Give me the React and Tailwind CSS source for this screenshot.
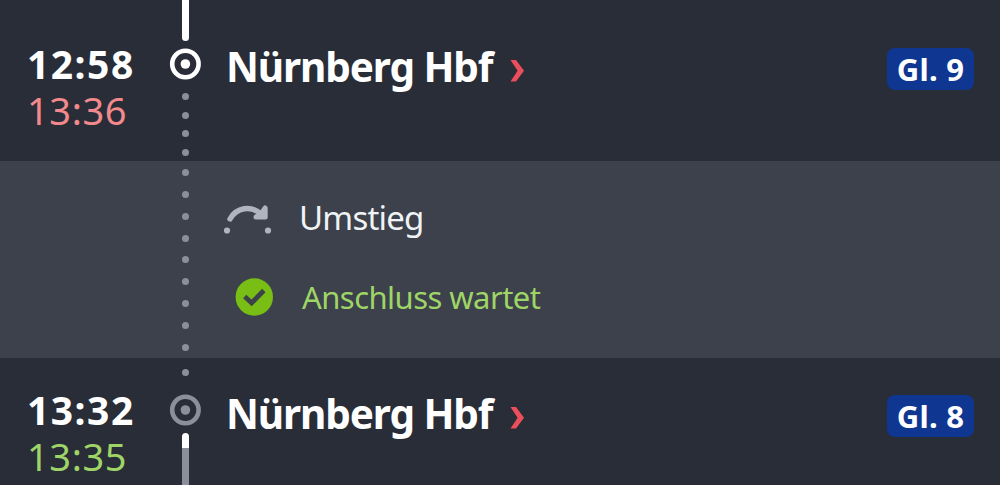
function Dots({ count, className }) {
  return (
    <div className={`flex flex-col items-center ${className}`}>
      {Array.from({ length: count }, (_, i) => (
        <span key={i} className="size-[7px] rounded-full bg-[#8b8f9b]" />
      ))}
    </div>
  );
}

function StopRing({ className }) {
  return (
    <svg viewBox="0 0 32 32" className={`size-8 shrink-0 ${className}`}>
      <circle cx="16.4" cy="16" r="13.2" fill="none" stroke="currentColor" strokeWidth="4.6" />
      <circle cx="16.4" cy="16" r="4.8" fill="currentColor" />
    </svg>
  );
}

function Chevron() {
  return (
    <svg viewBox="0 0 14 22" className="h-[22px] w-[14px] shrink-0">
      <path d="M0.5 0H6L14 10.8L6 21.6H0.5L7.6 10.8Z" fill="#ec4f5b" />
    </svg>
  );
}

function Times({ planned, actual, actualClass, className }) {
  return (
    <div className={`w-[169px] shrink-0 pl-[27px] ${className}`}>
      <div className="text-[39px] leading-[46px] font-bold tracking-[1.5px] text-white">{planned}</div>
      <div className={`text-[38px] leading-[46px] tracking-[0.6px] ${actualClass}`}>{actual}</div>
    </div>
  );
}

function Station({ name, track, className }) {
  return (
    <div className={`flex flex-1 items-start pr-[26px] pl-[25px] ${className}`}>
      <h2 className="w-[284px] text-[40.5px] leading-[56px] font-bold tracking-[-1.1px] whitespace-nowrap text-white">
        {name}
      </h2>
      <div className="pt-[21px]">
        <Chevron />
      </div>
      <div className="mt-[9px] ml-auto flex h-[42px] w-[87px] items-center justify-center rounded-lg bg-[#0f3792] text-[31px] font-bold tracking-[0.3px] whitespace-nowrap text-white">
        {track}
      </div>
    </div>
  );
}

function TransferIcon() {
  return (
    <svg viewBox="0 0 50 32" className="mt-[2px] h-8 w-[50px]" fill="none" stroke="#afb4bf">
      <path d="M7 16C13 5 28 1 39 12" strokeWidth="5.4" strokeLinecap="round" />
      <path
        d="M42.2 5V14H33L38 11Z"
        fill="#afb4bf"
        strokeWidth="5"
        strokeLinecap="round"
        strokeLinejoin="round"
      />
      <circle cx="4" cy="27.5" r="3.1" fill="#afb4bf" stroke="none" />
      <circle cx="45" cy="27.5" r="3.1" fill="#afb4bf" stroke="none" />
    </svg>
  );
}

function CheckIcon() {
  return (
    <svg viewBox="0 0 38 38" className="size-[38px]">
      <circle cx="19.3" cy="19" r="18.7" fill="#78be14" />
      <path d="M9.7 18.6L16.6 25L28.8 12.5" fill="none" stroke="#3c414b" strokeWidth="4.8" />
    </svg>
  );
}

export default function App() {
  return (
    <main className="h-[485px] w-[1000px] overflow-hidden bg-[#282d37] font-['Noto_Sans',sans-serif]">
      <section className="flex h-[161px]">
        <Times planned="12:58" actual="13:36" actualClass="text-[#f4898d]" className="pt-[41px]" />
        <div className="flex w-8 shrink-0 flex-col items-center">
          <div className="h-[41px] w-[7px] rounded-b-full bg-white" />
          <StopRing className="mt-[7px] text-white" />
          <Dots count={4} className="mt-[13px] gap-[11.6px]" />
        </div>
        <Station name="Nürnberg Hbf" track="Gl. 9" className="pt-[39px]" />
      </section>

      <section className="flex h-[197px] bg-[#3c414b]">
        <div className="ml-[169px] flex w-8 shrink-0 flex-col items-center">
          <Dots count={9} className="mt-[8px] gap-[14.85px]" />
        </div>
        <div className="pl-[22px]">
          <div className="mt-[37px] flex h-10 items-center">
            <TransferIcon />
            <span className="ml-[26px] text-[33px] leading-10 tracking-[-0.8px] text-[#f0f3f5]">Umstieg</span>
          </div>
          <div className="mt-[39px] flex h-10 items-center pl-3">
            <CheckIcon />
            <span className="ml-[29px] text-[31px] leading-10 tracking-[-0.55px] whitespace-nowrap text-[#9fd566]">
              Anschluss wartet
            </span>
          </div>
        </div>
      </section>

      <section className="flex h-[127px]">
        <Times planned="13:32" actual="13:35" actualClass="text-[#9fd566]" className="pt-[29px]" />
        <div className="flex w-8 shrink-0 flex-col items-center">
          <Dots count={1} className="mt-[11px]" />
          <StopRing className="mt-[18px] text-[#8b8f9b]" />
          <div className="mt-[7px] h-[15px] w-[7px] shrink-0 rounded-t-full bg-white" />
          <div className="w-[7px] flex-1 bg-[#8b8f9b]" />
        </div>
        <Station name="Nürnberg Hbf" track="Gl. 8" className="pt-[28px]" />
      </section>
    </main>
  );
}
